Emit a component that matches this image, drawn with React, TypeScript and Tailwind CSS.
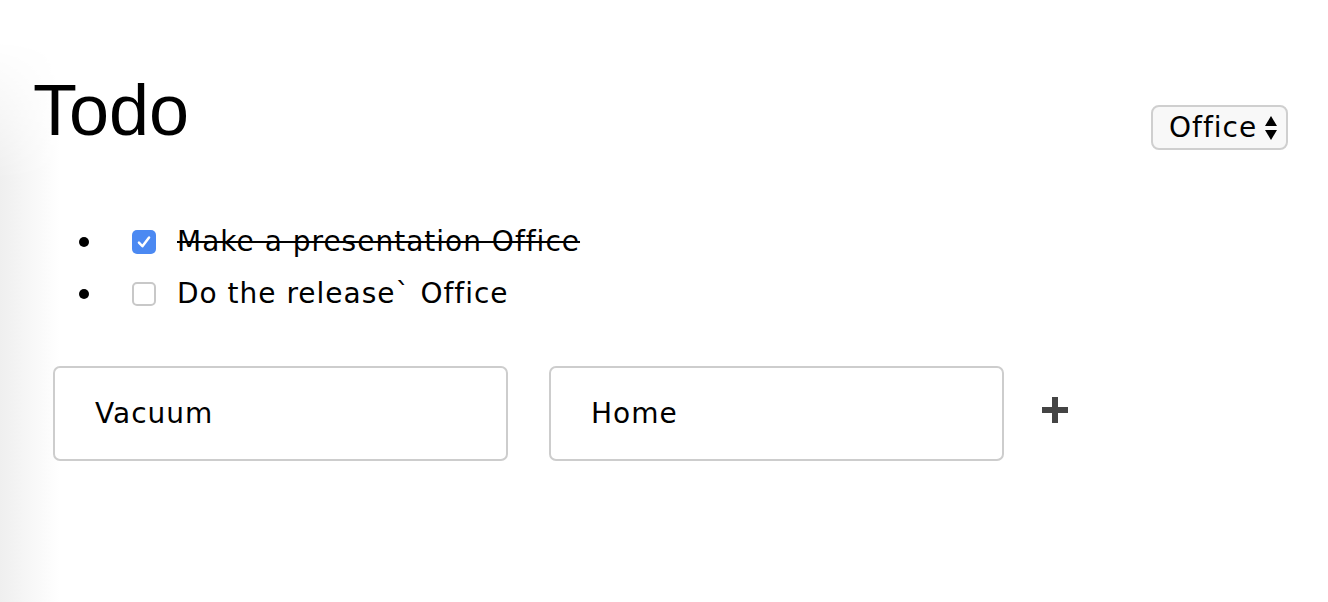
import React from "react";

function Check({ checked }: { checked: boolean }) {
  if (checked) {
    return (
      <span className="flex h-[24px] w-[24px] shrink-0 items-center justify-center rounded-[5px] bg-[#4b89f2]">
        <svg width="18" height="18" viewBox="0 0 16 16" fill="none">
          <path d="M3.5 8.5 L6.6 11.8 L12.5 4" stroke="white" strokeWidth="2.2" strokeLinecap="round" strokeLinejoin="round" />
        </svg>
      </span>
    );
  }
  return <span className="block h-[24px] w-[24px] shrink-0 rounded-[5px] border-2 border-[#c8c8c8] bg-white" />;
}

function Bullet() {
  return (
    <span className="flex w-[54px] shrink-0 items-center">
      <span className="ml-[1px] block h-[10px] w-[10px] rounded-full bg-black" />
    </span>
  );
}

export default function App() {
  const verdana = { fontFamily: '"DejaVu Sans", Verdana, sans-serif' };
  return (
    <div className="relative min-h-[602px] w-full overflow-hidden bg-white text-black">
      <div className="pointer-events-none absolute bottom-0 left-0 top-[40px] w-[60px] bg-gradient-to-r from-[#efefef] to-white [mask-image:linear-gradient(to_bottom,transparent,black_140px)]" />
      <div className="relative px-[33px] pt-[66px]">
        <div className="flex items-start justify-between">
          <h1 className="text-[72px] leading-[88px] font-normal" style={{ fontFamily: '"Liberation Sans", Arial, sans-serif' }}>
            Todo
          </h1>
          <div className="mr-[7px] mt-[39px] flex h-[45px] w-[137px] items-center justify-between rounded-[8px] border-2 border-[#cfcfcf] bg-[#f8f8f8] pl-[16px] pr-[8px] text-[28px] tracking-[1px]" style={verdana}>
            <span className="leading-none">Office</span>
            <svg width="14" height="26" viewBox="0 0 14 26">
              <path d="M7 1 L13 11 L1 11 Z" fill="black" />
              <path d="M1 15 L13 15 L7 25 Z" fill="black" />
            </svg>
          </div>
        </div>
        <ul className="mt-[71px] flex flex-col gap-[18px] pl-[45px] text-[28px] tracking-[1px]" style={verdana}>
          <li className="flex h-[34px] items-center">
            <Bullet />
            <Check checked />
            <span className="ml-[21px] line-through decoration-[2px]">Make a presentation Office</span>
          </li>
          <li className="flex h-[34px] items-center">
            <Bullet />
            <Check checked={false} />
            <span className="ml-[21px]">Do the release` Office</span>
          </li>
        </ul>
        <div className="ml-[20px] mt-[55px] flex items-center gap-[41px] text-[28px] tracking-[1px]" style={verdana}>
          <div className="flex h-[95px] w-[455px] items-center rounded-[7px] border-2 border-[#cdcdcd] bg-white pl-[40px]">
            Vacuum
          </div>
          <div className="flex h-[95px] w-[455px] items-center rounded-[7px] border-2 border-[#cdcdcd] bg-white pl-[40px]">
            Home
          </div>
          <svg width="26" height="26" viewBox="0 0 26 26" className="-ml-[3px] -mt-[8px]">
            <rect x="10" y="0" width="6" height="26" fill="#444" />
            <rect x="0" y="10" width="26" height="6" fill="#444" />
          </svg>
        </div>
      </div>
    </div>
  );
}
